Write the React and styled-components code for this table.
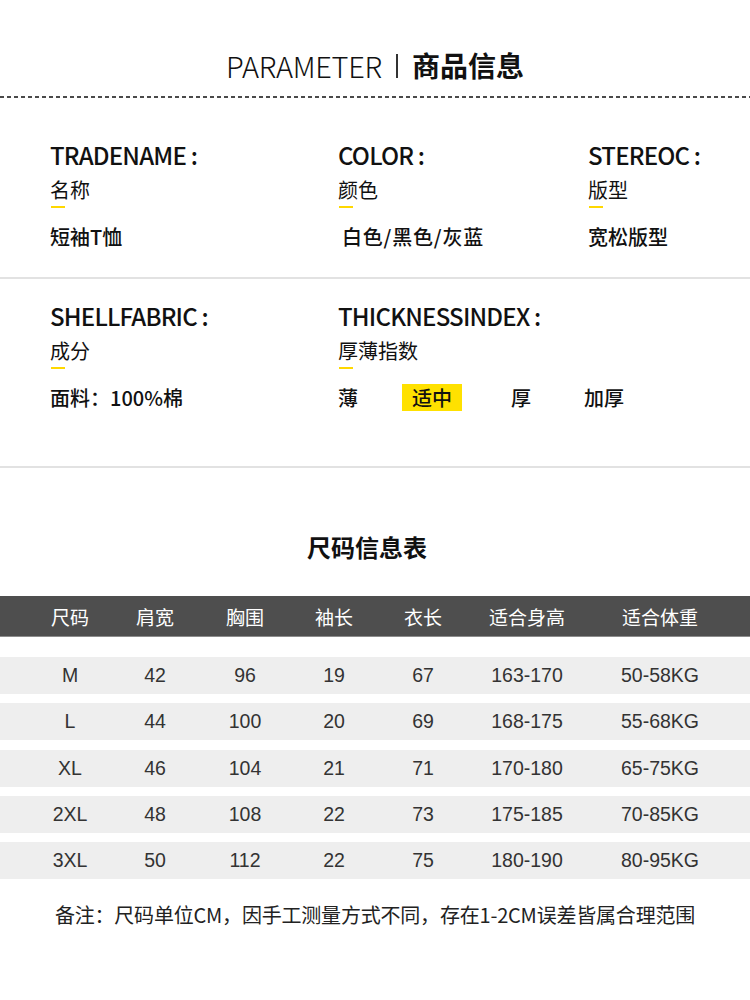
import React from "react";
import styled, { createGlobalStyle } from "styled-components";

const GlobalStyle = createGlobalStyle`
  html, body {
    margin: 0;
    padding: 0;
    background: #ffffff;
  }
  body {
    font-family: "Noto Sans CJK SC", "Noto Sans", sans-serif;
    color: #111;
  }
`;

const Page = styled.div`
  width: 750px;
  background: #fff;
`;

const Header = styled.header`
  height: 96px;
  display: flex;
  align-items: flex-end;
  justify-content: center;
  padding-bottom: 14px;
  box-sizing: border-box;
`;

const TitleEn = styled.span`
  font-size: 29px;
  font-weight: 300;
  line-height: 34px;
  letter-spacing: -0.3px;
  color: #111;
`;

const TitleBar = styled.span`
  display: inline-block;
  width: 2px;
  height: 24px;
  background: #333;
  margin: 0 14px 4px 14px;
`;

const TitleCn = styled.span`
  font-size: 28px;
  font-weight: 700;
  line-height: 34px;
  color: #111;
`;

const Dashed = styled.div`
  height: 2px;
  background: repeating-linear-gradient(
    to right,
    #4a4a4a 0 4px,
    transparent 4px 7px
  );
`;

const Section = styled.section`
  display: grid;
  grid-template-columns: 288px 250px 1fr;
  padding: ${(p) => p.$top}px 0 ${(p) => p.$bottom}px 50px;
  border-bottom: 2px solid #e2e2e2;
`;

const Field = styled.div`
  display: flex;
  flex-direction: column;
  align-items: flex-start;
`;

const LabelEn = styled.div`
  font-size: 24px;
  line-height: 28px;
  font-weight: 500;
  letter-spacing: -0.8px;
  color: #111;
`;

const LabelCn = styled.div`
  margin-top: 9px;
  font-size: 20px;
  line-height: 24px;
  color: #111;

  &::after {
    content: "";
    display: block;
    width: 14px;
    height: 2px;
    margin-top: 4px;
    margin-left: 1px;
    background: #ffd800;
  }
`;

const Value = styled.div`
  margin-top: 17px;
  font-size: 20px;
  line-height: 24px;
  font-weight: 500;
  letter-spacing: ${(p) => p.$spacing || 0}px;
  padding-left: ${(p) => p.$indent || 0}px;
  color: #111;
`;

const ThickRow = styled.div`
  margin-top: 14px;
  display: grid;
  grid-template-columns: 64px 109px 73px auto;
  align-items: center;
  height: 28px;
`;

const ThickItem = styled.span`
  justify-self: start;
  font-size: 20px;
  line-height: 27px;
  font-weight: 500;
  color: #111;
  padding: 0 ${(p) => (p.$active ? "10px" : "0")};
  background: ${(p) => (p.$active ? "#ffe100" : "transparent")};
`;

const TableTitle = styled.h2`
  margin: 64px 0 0;
  padding-right: 16px;
  text-align: center;
  font-size: 24px;
  line-height: 30px;
  font-weight: 700;
  color: #111;
`;

const Table = styled.div`
  margin-top: 34px;
`;

const HeadRow = styled.div`
  display: grid;
  grid-template-columns: 100px 70px 110px 68px 110px 98px 168px;
  padding-left: 20px;
  height: 40px;
  align-items: center;
  background: #4e4e4e;
  border-bottom: 1px solid #8c8c8c;
  margin-bottom: 20px;
`;

const HeadCell = styled.div`
  text-align: center;
  white-space: nowrap;
  font-size: 19px;
  color: #fff;
`;

const Row = styled.div`
  display: grid;
  grid-template-columns: 100px 70px 110px 68px 110px 98px 168px;
  padding-left: 20px;
  height: 37px;
  align-items: center;
  background: #eeeeee;
  margin-bottom: 9.3px;
`;

const Cell = styled.div`
  text-align: center;
  white-space: nowrap;
  font-family: "Liberation Sans", Arial, sans-serif;
  font-size: 19.5px;
  color: #333;
`;

const Note = styled.p`
  margin: 22px 0 0;
  padding-bottom: 60px;
  text-align: center;
  font-size: 20px;
  line-height: 28px;
  letter-spacing: -0.2px;
  color: #222;
`;

const headers = ["尺码", "肩宽", "胸围", "袖长", "衣长", "适合身高", "适合体重"];

const rows = [
  ["M", "42", "96", "19", "67", "163-170", "50-58KG"],
  ["L", "44", "100", "20", "69", "168-175", "55-68KG"],
  ["XL", "46", "104", "21", "71", "170-180", "65-75KG"],
  ["2XL", "48", "108", "22", "73", "175-185", "70-85KG"],
  ["3XL", "50", "112", "22", "75", "180-190", "80-95KG"],
];

const thickness = [
  { text: "薄" },
  { text: "适中", active: true },
  { text: "厚" },
  { text: "加厚" },
];

export default function App() {
  return (
    <Page>
      <GlobalStyle />
      <Header>
        <TitleEn>PARAMETER</TitleEn>
        <TitleBar />
        <TitleCn>商品信息</TitleCn>
      </Header>
      <Dashed />

      <Section $top={43} $bottom={28}>
        <Field>
          <LabelEn>TRADENAME :</LabelEn>
          <LabelCn>名称</LabelCn>
          <Value>短袖T恤</Value>
        </Field>
        <Field>
          <LabelEn>COLOR :</LabelEn>
          <LabelCn>颜色</LabelCn>
          <Value $spacing={0.8} $indent={4}>白色/黑色/灰蓝</Value>
        </Field>
        <Field>
          <LabelEn>STEREOC :</LabelEn>
          <LabelCn>版型</LabelCn>
          <Value>宽松版型</Value>
        </Field>
      </Section>

      <Section $top={23} $bottom={55}>
        <Field>
          <LabelEn>SHELLFABRIC :</LabelEn>
          <LabelCn>成分</LabelCn>
          <Value>面料：100%棉</Value>
        </Field>
        <Field style={{ gridColumn: "2 / 4" }}>
          <LabelEn>THICKNESSINDEX :</LabelEn>
          <LabelCn>厚薄指数</LabelCn>
          <ThickRow>
            {thickness.map((t) => (
              <ThickItem key={t.text} $active={t.active}>
                {t.text}
              </ThickItem>
            ))}
          </ThickRow>
        </Field>
      </Section>

      <TableTitle>尺码信息表</TableTitle>

      <Table>
        <HeadRow>
          {headers.map((h) => (
            <HeadCell key={h}>{h}</HeadCell>
          ))}
        </HeadRow>
        {rows.map((r) => (
          <Row key={r[0]}>
            {r.map((c, i) => (
              <Cell key={i}>{c}</Cell>
            ))}
          </Row>
        ))}
      </Table>

      <Note>备注：尺码单位CM，因手工测量方式不同，存在1-2CM误差皆属合理范围</Note>
    </Page>
  );
}
